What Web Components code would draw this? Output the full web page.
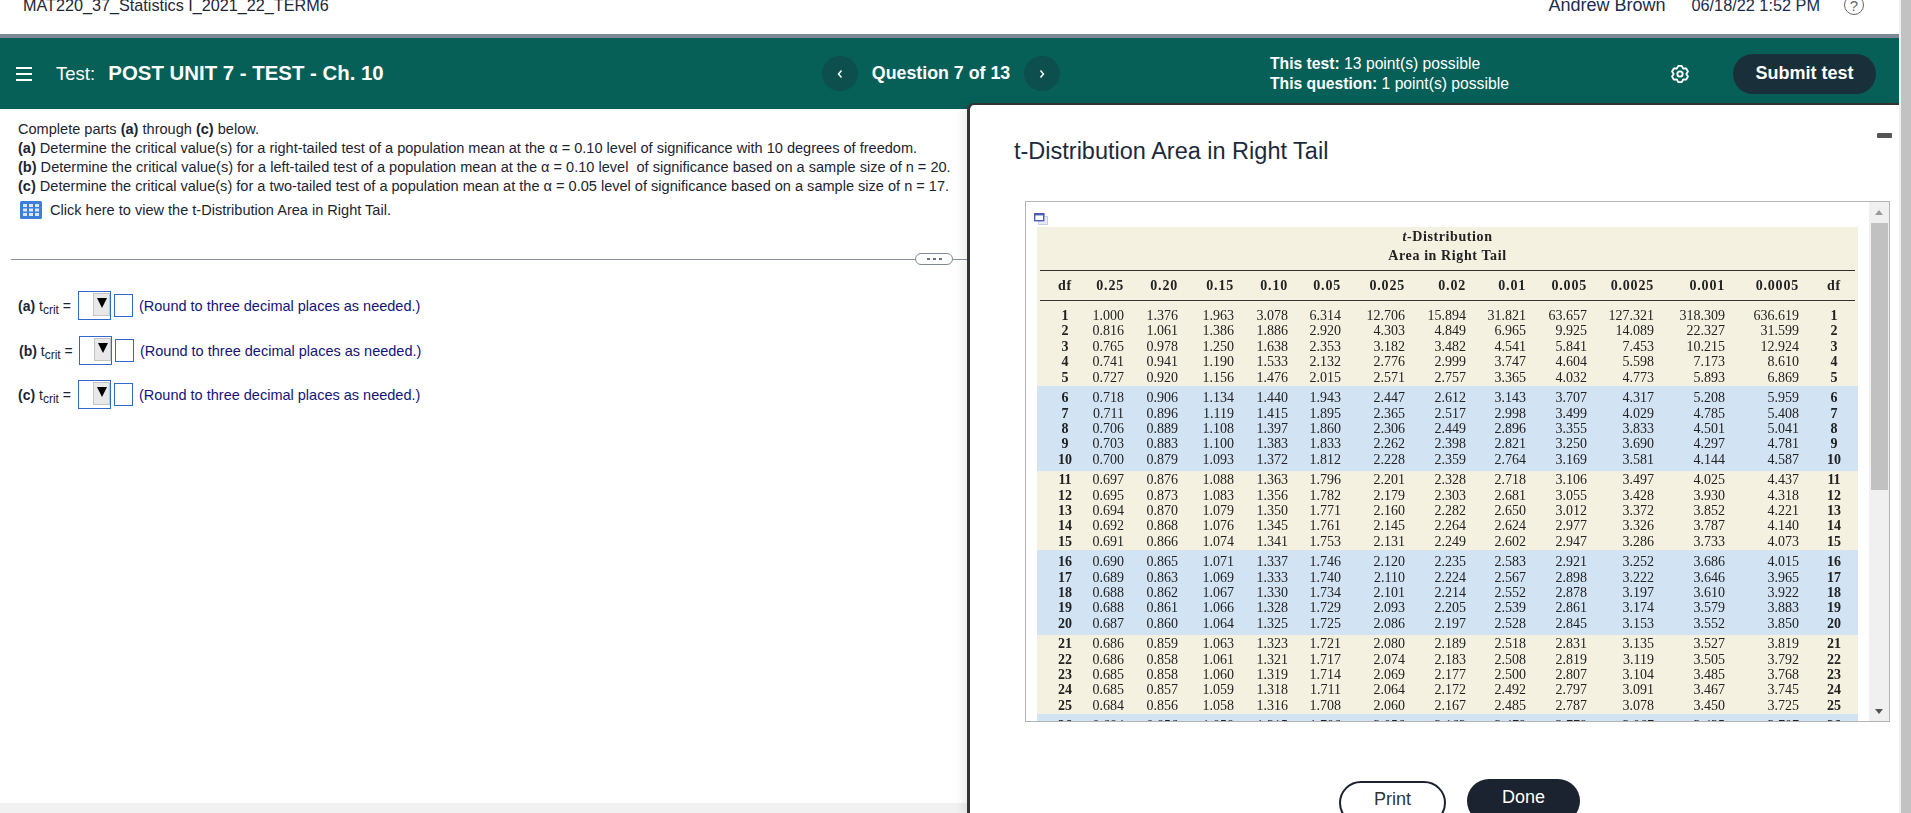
<!DOCTYPE html>
<html lang="en">
<head>
<meta charset="utf-8">
<title>Test</title>
<style>
  html, body { margin: 0; height: 100%; overflow: hidden; background: #fff; }
  body { font-family: "Liberation Sans", Arial, sans-serif; }
</style>
</head>
<body>
<mx-app>
  <mx-topbar slot="top" course="MAT220_37_Statistics I_2021_22_TERM6" user="Andrew Brown" stamp="06/18/22 1:52 PM"></mx-topbar>
  <mx-testbar slot="top"></mx-testbar>
  <mx-question>
    <mx-answer part="a"></mx-answer>
    <mx-answer part="b"></mx-answer>
    <mx-answer part="c"></mx-answer>
  </mx-question>
  <mx-panel slot="overlay" heading="t-Distribution Area in Right Tail">
    <mx-ttable></mx-ttable>
  </mx-panel>
</mx-app>

<script>
class App extends HTMLElement {
  constructor() {
    super();
    this.attachShadow({ mode: "open" });
  }
  connectedCallback() {
    this.shadowRoot.innerHTML = `
      <style>
        :host { display: flex; width: 100%; height: 813px; overflow: hidden; }
        .page { position: relative; width: 1899px; height: 100%; display: flex; flex-direction: column; overflow: hidden; }
        .main { flex: 1; display: flex; flex-direction: column; min-height: 0; }
        .foot { height: 10px; background: #f1f1f1; }
        .pagebar { flex: 1; background: #c2c2c2; border-left: 2px solid #f0f0f0; }
      </style>
      <div class="page">
        <slot name="top"></slot>
        <div class="main"><slot></slot><div class="foot"></div></div>
        <slot name="overlay"></slot>
      </div>
      <div class="pagebar"></div>
    `;
  }
}

class Topbar extends HTMLElement {
  constructor() {
    super();
    this.attachShadow({ mode: "open" });
  }
  connectedCallback() {
    this.shadowRoot.innerHTML = `
      <style>
        :host { display: block; height: 34px; overflow: hidden; border-bottom: 4px solid #7f8995; }
        .row { display: flex; align-items: center; height: 20px; margin-top: -5px; padding: 0 35px 0 23px; font-size: 16.2px; color: #1d2738; }
        .course { flex: 1; }
        .user { margin-right: 26px; font-size: 18px; color: #1c2c4c; }
        .stamp { margin-right: 24px; font-size: 16.3px; color: #1c2c4c; }
        .help { width: 18px; height: 18px; border: 1.5px solid #666; border-radius: 50%; display: flex; align-items: center; justify-content: center; font-size: 15px; color: #666; }
      </style>
      <div class="row">
        <span class="course">${this.getAttribute("course")}</span>
        <span class="user">${this.getAttribute("user")}</span>
        <span class="stamp">${this.getAttribute("stamp")}</span>
        <span class="help">?</span>
      </div>
    `;
  }
}

class Testbar extends HTMLElement {
  constructor() {
    super();
    this.attachShadow({ mode: "open" });
  }
  connectedCallback() {
    this.shadowRoot.innerHTML = `
      <style>
        :host { display: flex; align-items: center; height: 71px; background: #066058; color: #fff; font-size: 18.5px; }
        .burger { display: flex; flex-direction: column; gap: 4px; width: 16px; margin: 0 24px 0 16px; }
        .burger i { height: 2px; background: #fff; }
        .title { width: 766px; white-space: pre; }
        .title b { font-size: 20.4px; margin-left: 3px; }
        b { font-weight: 700; }
        .nav { width: 36px; height: 35px; border-radius: 50%; background: #0c4f4d; display: flex; align-items: center; justify-content: center; flex: none; }
        .q { width: 166px; text-align: center; font-weight: 700; font-size: 17.8px; }
        .points { margin-left: 210px; width: 400px; font-size: 15.7px; line-height: 20px; }
        .gear { width: 20px; height: 20px; flex: none; margin-right: 43px; }
        .submit { width: 143px; height: 40px; border-radius: 20px; background: #19303a; font-weight: 700; font-size: 18px; display: flex; align-items: center; justify-content: center; }
      </style>
      <div class="burger"><i></i><i></i><i></i></div>
      <div class="title">Test:  <b>POST UNIT 7 - TEST - Ch. 10</b></div>
      <div class="nav"><svg width="8" height="10" viewBox="0 0 8 10"><path d="M5.5 1.5 2.5 5l3 3.5" fill="none" stroke="#fff" stroke-width="1.5"/></svg></div>
      <div class="q">Question 7 of 13</div>
      <div class="nav"><svg width="8" height="10" viewBox="0 0 8 10"><path d="M2.5 1.5 5.5 5l-3 3.5" fill="none" stroke="#fff" stroke-width="1.5"/></svg></div>
      <div class="points"><b>This test:</b> 13 point(s) possible<br><b>This question:</b> 1 point(s) possible</div>
      <svg class="gear" viewBox="0 0 24 24" fill="none" stroke="#fff" stroke-width="2.2" stroke-linejoin="round">
        <polygon points="9.92,2.22 14.08,2.22 15.8,5.42 19.43,5.31 21.51,8.91 19.6,12 21.51,15.09 19.43,18.69 15.8,18.58 14.08,21.78 9.92,21.78 8.2,18.58 4.57,18.69 2.49,15.09 4.4,12 2.49,8.91 4.57,5.31 8.2,5.42"/>
        <circle cx="12" cy="12" r="3.2"/>
      </svg>
      <div class="submit">Submit test</div>
    `;
  }
}

class Question extends HTMLElement {
  constructor() {
    super();
    this.attachShadow({ mode: "open" });
  }
  connectedCallback() {
    this.shadowRoot.innerHTML = `
      <style>
        :host { display: block; flex: 1; min-height: 0; font-size: 14.55px; color: #1c2433; }
        .text { padding: 11px 0 0 18px; line-height: 19px; white-space: pre; }
        .link { display: flex; align-items: center; gap: 8px; margin: 5px 0 0 2px; height: 18px; }
        .rule { display: flex; align-items: center; margin: 34px 0 0 11px; width: 956px; }
        .rule i { flex: 1; height: 1px; background: #8a919c; }
        .pill { width: 36px; height: 10px; box-sizing: content-box; border: 1px solid #7f8995; border-radius: 6px; display: flex; align-items: center; justify-content: center; gap: 3px; }
        .pill u { width: 3px; height: 2px; background: #6c7482; }
        .rule i:last-child { flex: none; width: 14px; }
        .answers { display: flex; flex-direction: column; gap: 15px; padding: 26px 0 0 18px; }
      </style>
      <div class="text">Complete parts <b>(a)</b> through <b>(c)</b> below.
<b>(a)</b> Determine the critical value(s) for a right-tailed test of a population mean at the α = 0.10 level of significance with 10 degrees of freedom.
<b>(b)</b> Determine the critical value(s) for a left-tailed test of a population mean at the α = 0.10 level  of significance based on a sample size of n = 20.
<b>(c)</b> Determine the critical value(s) for a two-tailed test of a population mean at the α = 0.05 level of significance based on a sample size of n = 17.
<div class="link"><svg width="22" height="18" viewBox="0 0 22 18"><rect width="22" height="18" rx="1.5" fill="#3f7fdc"/><g fill="#dbe8fa"><rect x="3" y="3" width="4" height="3"/><rect x="9" y="3" width="4" height="3"/><rect x="15" y="3" width="4" height="3"/><rect x="3" y="7.5" width="4" height="3"/><rect x="9" y="7.5" width="4" height="3"/><rect x="15" y="7.5" width="4" height="3"/><rect x="3" y="12" width="4" height="3"/><rect x="9" y="12" width="4" height="3"/><rect x="15" y="12" width="4" height="3"/></g></svg><span>Click here to view the t-Distribution Area in Right Tail.</span></div></div>
      <div class="rule"><i></i><span class="pill"><u></u><u></u><u></u></span><i></i></div>
      <div class="answers"><slot></slot></div>
    `;
  }
}

class Answer extends HTMLElement {
  constructor() {
    super();
    this.attachShadow({ mode: "open" });
  }
  connectedCallback() {
    this.shadowRoot.innerHTML = `
      <style>
        :host { display: flex; align-items: center; height: 29px; font-size: 14px; color: #1c2433; }
        :host([part="b"]) { margin: 1px 0 0 1px; }
        .label { width: 60px; white-space: nowrap; }
        sub { font-size: 12px; line-height: 0; vertical-align: -3px; }
        .select { box-sizing: border-box; width: 33px; height: 29px; border: 1.5px solid #2f6ac8; display: flex; justify-content: flex-end; }
        .arrow { box-sizing: border-box; width: 17px; height: 23px; margin-top: 1px; background: #e8e8e8; border: 1px solid #c4c4c4; display: flex; justify-content: center; padding-top: 4px; }
        .arrow i { width: 0; height: 0; border-left: 5px solid transparent; border-right: 5px solid transparent; border-top: 10px solid #000; }
        .input { box-sizing: border-box; width: 19px; height: 23px; border: 1px solid #2f6ac8; margin: 0 6px 0 3px; }
        .note { color: #14147a; font-size: 14.5px; }
      </style>
      <span class="label"><b>(${this.getAttribute("part")})</b> t<sub>crit</sub> =</span>
      <span class="select"><span class="arrow"><i></i></span></span>
      <span class="input"></span>
      <span class="note">(Round to three decimal places as needed.)</span>
    `;
  }
}

class Panel extends HTMLElement {
  constructor() {
    super();
    this.attachShadow({ mode: "open" });
  }
  connectedCallback() {
    this.shadowRoot.innerHTML = `
      <style>
        :host { position: absolute; left: 967px; right: 0; top: 103px; bottom: 0; box-sizing: border-box; background: #fff; border-left: 3px solid #333; border-top: 2px solid #333; border-top-left-radius: 7px; box-shadow: -5px 0 8px rgba(0,0,0,.07); overflow: hidden; }
        h1 { margin: 31px 0 0 44px; font-size: 23.5px; line-height: 30px; font-weight: 400; color: #1b2a3c; }
        .min { position: absolute; right: 7px; top: 28px; width: 15px; height: 5px; background: #555; border-radius: 1px; }
        .body { margin: 35px 9px 0 55px; }
        .actions { display: flex; align-items: flex-start; gap: 21px; margin: 57px 0 0 369px; }
        .btn { box-sizing: border-box; height: 44px; border-radius: 22px; font-size: 18px; display: flex; align-items: center; justify-content: center; padding-bottom: 8px; }
        .print { width: 107px; margin-top: 2px; border: 2px solid #1b2230; color: #333; background: #fff; }
        .done { width: 113px; background: #1b2230; color: #fff; }
      </style>
      <h1>${this.getAttribute("heading")}</h1>
      <div class="min"></div>
      <div class="body"><slot></slot></div>
      <div class="actions"><span class="btn print">Print</span><span class="btn done">Done</span></div>
    `;
  }
}

const HEADS = ["0.25","0.20","0.15","0.10","0.05","0.025","0.02","0.01","0.005","0.0025","0.001","0.0005"];
const ROWS = `1.000 1.376 1.963 3.078 6.314 12.706 15.894 31.821 63.657 127.321 318.309 636.619
0.816 1.061 1.386 1.886 2.920 4.303 4.849 6.965 9.925 14.089 22.327 31.599
0.765 0.978 1.250 1.638 2.353 3.182 3.482 4.541 5.841 7.453 10.215 12.924
0.741 0.941 1.190 1.533 2.132 2.776 2.999 3.747 4.604 5.598 7.173 8.610
0.727 0.920 1.156 1.476 2.015 2.571 2.757 3.365 4.032 4.773 5.893 6.869
0.718 0.906 1.134 1.440 1.943 2.447 2.612 3.143 3.707 4.317 5.208 5.959
0.711 0.896 1.119 1.415 1.895 2.365 2.517 2.998 3.499 4.029 4.785 5.408
0.706 0.889 1.108 1.397 1.860 2.306 2.449 2.896 3.355 3.833 4.501 5.041
0.703 0.883 1.100 1.383 1.833 2.262 2.398 2.821 3.250 3.690 4.297 4.781
0.700 0.879 1.093 1.372 1.812 2.228 2.359 2.764 3.169 3.581 4.144 4.587
0.697 0.876 1.088 1.363 1.796 2.201 2.328 2.718 3.106 3.497 4.025 4.437
0.695 0.873 1.083 1.356 1.782 2.179 2.303 2.681 3.055 3.428 3.930 4.318
0.694 0.870 1.079 1.350 1.771 2.160 2.282 2.650 3.012 3.372 3.852 4.221
0.692 0.868 1.076 1.345 1.761 2.145 2.264 2.624 2.977 3.326 3.787 4.140
0.691 0.866 1.074 1.341 1.753 2.131 2.249 2.602 2.947 3.286 3.733 4.073
0.690 0.865 1.071 1.337 1.746 2.120 2.235 2.583 2.921 3.252 3.686 4.015
0.689 0.863 1.069 1.333 1.740 2.110 2.224 2.567 2.898 3.222 3.646 3.965
0.688 0.862 1.067 1.330 1.734 2.101 2.214 2.552 2.878 3.197 3.610 3.922
0.688 0.861 1.066 1.328 1.729 2.093 2.205 2.539 2.861 3.174 3.579 3.883
0.687 0.860 1.064 1.325 1.725 2.086 2.197 2.528 2.845 3.153 3.552 3.850
0.686 0.859 1.063 1.323 1.721 2.080 2.189 2.518 2.831 3.135 3.527 3.819
0.686 0.858 1.061 1.321 1.717 2.074 2.183 2.508 2.819 3.119 3.505 3.792
0.685 0.858 1.060 1.319 1.714 2.069 2.177 2.500 2.807 3.104 3.485 3.768
0.685 0.857 1.059 1.318 1.711 2.064 2.172 2.492 2.797 3.091 3.467 3.745
0.684 0.856 1.058 1.316 1.708 2.060 2.167 2.485 2.787 3.078 3.450 3.725
0.684 0.856 1.058 1.315 1.706 2.056 2.162 2.479 2.779 3.067 3.435 3.707`.split("\n").map(r => r.split(" "));

class TTable extends HTMLElement {
  constructor() {
    super();
    this.attachShadow({ mode: "open" });
  }
  row(cls, df, cells) {
    return `<div class="grid ${cls}"><b>${df}</b>${cells.map(c => `<span>${c}</span>`).join("")}<b>${df}</b></div>`;
  }
  band(cls, from, to) {
    let out = "";
    for (let i = from; i <= to && i <= ROWS.length; i++) out += this.row("data", i, ROWS[i - 1]);
    return `<div class="band ${cls}">${out}</div>`;
  }
  connectedCallback() {
    this.shadowRoot.innerHTML = `
      <style>
        :host { display: flex; height: 521px; box-sizing: border-box; border: 1px solid #b4b4b4; border-width: 1px 1.5px 1.5px 1px; overflow: hidden; }
        .scroll { flex: 1; overflow: hidden; padding-left: 11px; min-width: 0; }
        .icon { display: block; height: 25px; margin-left: -3px; }
        .table { width: 821px; font-family: "Liberation Serif", "Times New Roman", serif; color: #222; font-size: 14px; filter: blur(0.45px); }
        .head { background: #f4f1e0; height: 159px; overflow: hidden; }
        .cap { text-align: center; font-weight: 700; line-height: 19px; font-size: 14px; letter-spacing: .6px; height: 43px; }
        .rules { margin: 0 3px 0 3px; border-top: 1.5px solid #333; border-bottom: 1.5px solid #333; height: 29px; display: flex; align-items: center; }
        .grid { display: grid; grid-template-columns: 34px 42px 54px 56px 54px 53px 64px 61px 60px 61px 67px 71px 74px 59px; padding-left: 11px; text-align: right; }
        .grid b { text-align: center; }
        .grid b:last-child { margin-left: 11px; }
        .rules .grid { padding-left: 8px; flex: none; font-weight: 700; letter-spacing: .8px; }
        .rules .grid span { font-weight: 700; }
        .data { height: 15.4px; line-height: 15.4px; }
        .first { padding-top: 7px; }
        .band.cream { background: #f4f1e0; height: 79px; padding-top: 1.3px; box-sizing: border-box; }
        .band.blue { background: #d2e3f4; height: 85px; padding-top: 4.3px; box-sizing: border-box; }
        .bar { width: 20px; flex: none; background: #f0f0f0; position: relative; display: flex; flex-direction: column; align-items: center; }
        .up { margin-top: 8px; width: 0; height: 0; border: 4px solid transparent; border-bottom: 5px solid #999; border-top: 0; }
        .thumb { margin-top: 8px; width: 17px; height: 267px; background: #c1c1c1; }
        .down { margin-top: auto; margin-bottom: 7px; width: 0; height: 0; border: 4px solid transparent; border-top: 5px solid #555; border-bottom: 0; }
      </style>
      <div class="scroll">
        <svg class="icon" width="15" height="25" viewBox="0 0 15 25" fill="none"><rect x="4.5" y="14.5" width="9" height="8" fill="#e8ecf8" stroke="#c5cde8"/><rect x="0.7" y="11.7" width="9" height="7" fill="#fff" stroke="#4a5cb0" stroke-width="1.4"/><rect x="0" y="11" width="10.4" height="2.4" fill="#4a5cb0"/></svg>
        <div class="table">
          <div class="head">
            <div class="cap"><i>t</i>-Distribution<br>Area in Right Tail</div>
            <div class="rules">${this.row("", "df", HEADS)}</div>
            <div class="first">${ROWS.slice(0, 5).map((r, i) => this.row("data", i + 1, r)).join("")}</div>
          </div>
          ${this.band("blue", 6, 10)}
          ${this.band("cream", 11, 15)}
          ${this.band("blue", 16, 20)}
          ${this.band("cream", 21, 25)}
          ${this.band("blue", 26, 26)}
        </div>
      </div>
      <div class="bar"><i class="up"></i><i class="thumb"></i><i class="down"></i></div>
    `;
  }
}

customElements.define("mx-app", App);
customElements.define("mx-topbar", Topbar);
customElements.define("mx-testbar", Testbar);
customElements.define("mx-question", Question);
customElements.define("mx-answer", Answer);
customElements.define("mx-panel", Panel);
customElements.define("mx-ttable", TTable);
</script>
</body>
</html>
